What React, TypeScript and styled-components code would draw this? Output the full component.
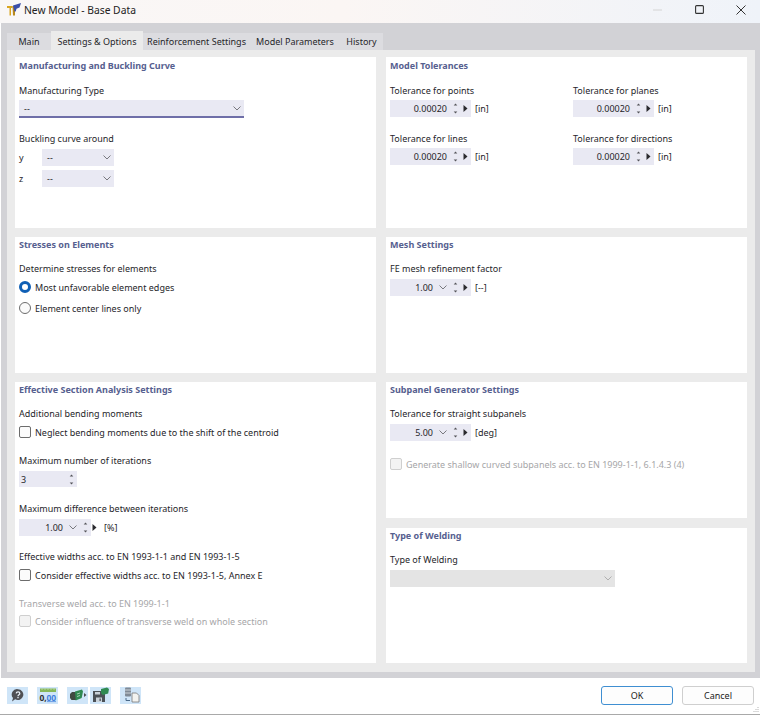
import React from 'react';
import styled, { createGlobalStyle } from 'styled-components';

const Global = createGlobalStyle`
  html, body { margin: 0; padding: 0; background: #ffffff; }
  body { font-family: "Noto Sans", "Open Sans", sans-serif; font-size: 9px; color: #26262a; }
  * { box-sizing: border-box; }
`;

const Window = styled.div`
  position: relative; width: 760px; height: 715px; display: flex; flex-direction: column; background: #fff; overflow: hidden;
`;
const TitleBar = styled.div`
  height: 23px; flex: none; display: flex; align-items: center; padding: 0 0 4px 7px;
  background: linear-gradient(90deg, #f9f7f7 0%, #fbf6f4 45%, #eff3f9 100%);
`;
const AppTitle = styled.span`margin-left: 3px; font-size: 10.3px; color: #222;`;
const WindowButtons = styled.div`margin-left: auto; margin-right: -2px; display: flex; align-items: center;`;
const WindowButton = styled.span`width: 42px; height: 19px; display: flex; align-items: center; justify-content: center;`;
const Body = styled.div`
  flex: none; height: 655px; margin-left: 1px; background: #d2d2d6; display: flex; flex-direction: column; padding: 8px 5px 6px 6px;
`;
const TabRow = styled.div`display: flex; height: 19px; flex: none; align-items: flex-end;`;
const Tab = styled.div<{ $active?: boolean; $w: number }>`
  width: ${p => p.$w}px; height: ${p => (p.$active ? 19 : 17)}px; display: flex; align-items: center; justify-content: center;
  padding-top: ${p => (p.$active ? 1 : 0)}px;
  background: ${p => (p.$active ? '#ebebeb' : '#dcdce0')}; color: #26262a; white-space: nowrap;
`;
const TabPanel = styled.div`
  flex: 1; background: #ebebeb; padding: 7px 7px 9px 8px;
  display: grid; grid-template-columns: 361px 361px; column-gap: 10px;
`;
const Column = styled.div`display: flex; flex-direction: column;`;
const Card = styled.section<{ $h: number; $gap?: number }>`
  height: ${p => p.$h}px; margin-bottom: ${p => p.$gap ?? 0}px; background: #fff; padding: 2px 4px 0 4px;
  display: flex; flex-direction: column; align-items: flex-start;
`;
const CardTitle = styled.h3<{ $after?: number; $before?: number }>`
  margin: ${p => p.$before ?? 0}px 0 ${p => p.$after ?? 11}px; font-size: 9px; line-height: 12px; font-weight: 700; color: #56608f; white-space: nowrap;
`;
const Label = styled.div<{ $mute?: boolean; $top?: number }>`
  line-height: 14px; margin-top: ${p => p.$top ?? 0}px; color: ${p => (p.$mute ? '#a6a6a8' : '#26262a')}; white-space: nowrap;
`;
const Field = styled.div<{ $w: number; $disabled?: boolean; $focus?: boolean; $h?: number; $pad?: number; $top?: number }>`
  width: ${p => p.$w}px; height: ${p => p.$h ?? 17}px; flex: none; display: flex; align-items: center;
  margin-top: ${p => p.$top ?? 0}px;
  background: ${p => (p.$disabled ? '#e4e4e4' : '#e9e9f3')}; padding: 0 3px 0 ${p => p.$pad ?? 5}px;
  border-bottom: ${p => (p.$focus ? '2px solid #6f6fa8' : 'none')}; color: #26262a;
`;
const Value = styled.span`flex: 1; text-align: right; white-space: nowrap;`;
const LeftValue = styled.span`flex: 1; white-space: nowrap;`;
const FieldRow = styled.div<{ $top?: number; $gap?: number }>`
  display: flex; align-items: center; gap: ${p => p.$gap ?? 4}px; margin-top: ${p => p.$top ?? 2}px;
`;
const AxisRow = styled.div<{ $top?: number }>`display: flex; align-items: center; margin-top: ${p => p.$top ?? 0}px;`;
const AxisLabel = styled.span`width: 23px;`;
const OptionRow = styled.div<{ $top?: number; $mute?: boolean }>`
  display: flex; align-items: center; gap: 4px; height: 14px; margin-top: ${p => p.$top ?? 0}px; color: ${p => (p.$mute ? '#a6a6a8' : '#26262a')}; white-space: nowrap;
`;
const Box = styled.span<{ $mute?: boolean }>`
  width: 12px; height: 12px; flex: none; border-radius: 2px; background: ${p => (p.$mute ? '#f3f3f3' : '#fbfbfb')};
  border: 1px solid ${p => (p.$mute ? '#cfcfcf' : '#6c6c6c')};
`;
const Radio = styled.span<{ $on?: boolean }>`
  width: 12px; height: 12px; flex: none; border-radius: 50%; background: ${p => (p.$on ? '#fff' : '#fbfbfb')};
  border: ${p => (p.$on ? '3px solid #0f5fb5' : '1px solid #6c6c6c')};
`;
const TwoCols = styled.div`display: grid; grid-template-columns: 183px 160px; row-gap: 15px; align-self: stretch;`;
const Group = styled.div`display: flex; flex-direction: column;`;
const Footer = styled.div`
  flex: 1; display: flex; align-items: center; padding: 0 6px 2px 7px; background: #fff; border-bottom: 1px solid #a9a9a9;
`;
const ToolGroup = styled.div`display: flex; gap: 2px; margin-right: 9px;`;
const ToolButton = styled.span`
  width: 21px; height: 17px; background: #cfe5f8; display: flex; align-items: center; justify-content: center;
`;
const Buttons = styled.div`margin-left: auto; display: flex; gap: 9px;`;
const Btn = styled.div<{ $primary?: boolean }>`
  width: 72px; height: 19px; border-radius: 3px; background: #fdfdfd; display: flex; align-items: center; justify-content: center;
  border: 1px solid ${p => (p.$primary ? '#3f8fd2' : '#cfcfcf')}; color: #222;
`;
const Grip = styled.svg`position: absolute; right: 1px; bottom: 2px;`;
const ChevronSlot = styled.span`margin-left: 6px; display: flex;`;
const SpinIcon = styled.svg`margin-left: 6px; flex: none;`;
const NextIcon = styled.svg<{ $gap?: number }>`margin-left: ${p => p.$gap ?? 5}px; flex: none;`;
const PercentUnit = styled.span`margin-left: 7px;`;

const Chevron = ({ c = '#6b6b70' }: { c?: string }) => (
  <svg width="8" height="5" viewBox="0 0 8 5"><path d="M.5.5 4 4 7.500.5" fill="none" stroke={c} strokeWidth=".9" /></svg>
);
const Spin = () => (
  <SpinIcon width="5" height="13" viewBox="0 0 5 13">
    <path d="M2.500 1.500 4.300 3.500H.7zM2.500 11.500.7 9.500h3.600z" fill="#55555a" />
  </SpinIcon>
);
const Next = ({ gap }: { gap?: number }) => (
  <NextIcon $gap={gap} width="5" height="7" viewBox="0 0 5 7">
    <path d="M.5 0 4.500 3.500.5 7z" fill="#2a2a2e" />
  </NextIcon>
);
const Num = ({ v, unit, drop, top }: { v: string; unit: string; drop?: boolean; top?: number }) => (
  <FieldRow $top={top}>
    <Field $w={81}>
      <Value>{v}</Value>
      {drop && <ChevronSlot><Chevron /></ChevronSlot>}
      <Spin /><Next />
    </Field>
    <span>{unit}</span>
  </FieldRow>
);

const Logo = () => (
  <svg width="14" height="13" viewBox="0 0 14 13">
    <path d="M0 3h5.500V5H4v7.500H2.500V5H0z" fill="#d9a520" />
    <path d="M5.500 3H8v9.500H6z" fill="#b98a1c" />
    <path d="M6 2.500 14 0l-1.500 4.500-3 1.200-.8 2.800H7.500z" fill="#3b4fa8" />
  </svg>
);
const Help = () => (
  <svg width="15" height="15" viewBox="0 0 15 15">
    <path d="M8 1.200a5.400 5.400 0 1 1-2.900 10L2 13.600l1-3.600A5.400 5.400 0 0 1 8 1.200z" fill="#4f5054" />
    <path d="M6.200 5.400c.2-2 3.600-2 3.600 0 0 1.400-1.800 1.400-1.800 2.800M8 9v1.200" stroke="#e8eef5" strokeWidth="1.300" fill="none" />
  </svg>
);
const Units = () => (
  <svg width="18" height="15" viewBox="0 0 18 15">
    <rect x="1" y="0.5" width="16" height="3.500" fill="#86b85a" />
    <path d="M3 .5v1.500M6 .5v1.500M9 .5v1.500M12 .5v1.500M15 .5v1.500" stroke="#d9e8c8" strokeWidth=".6" />
    <path d="M8 13.600h9" stroke="#3f7fdc" strokeWidth=".7" />
    <text x="0.5" y="12.500" fontSize="8.500" fontWeight="700" fontFamily="Noto Sans" fill="#333">0,</text>
    <text x="7.500" y="12.500" fontSize="8.500" fontWeight="700" fontFamily="Noto Sans" fill="#3f7fdc">00</text>
  </svg>
);
const Load = () => (
  <svg width="18" height="14" viewBox="0 0 18 14">
    <path d="M1 6 3 4h4v8H2.500L1 10z" fill="#3f4a42" />
    <path d="M6 3.500 13 1.500l1 2-1.300 6.500-6 2.500z" fill="#2f8a52" />
    <path d="M8 6l3-1M8 8.500l3-1" stroke="#bfe0c8" strokeWidth=".8" />
    <path d="M15 5l2.500 2-2.500 2z" fill="#4c4c50" />
  </svg>
);
const Save = () => (
  <svg width="18" height="16" viewBox="0 0 18 16">
    <path d="M1 4h10.500L13 5.500V15H1z" fill="#4b5157" />
    <rect x="3" y="5" width="5" height="2.500" fill="#c9d2da" />
    <rect x="4" y="10.500" width="6" height="4.500" fill="#c9d2da" />
    <rect x="7.500" y="11.500" width="1.300" height="2.500" fill="#4b5157" />
    <path d="M9 2 15 .5l2 1.500-.8 4.500-5.500 1.500L9 6z" fill="#2f8a52" />
  </svg>
);
const Copy = () => (
  <svg width="18" height="16" viewBox="0 0 18 16">
    <rect x="3" y="0.5" width="6" height="9" rx="1" fill="#7f8a96" />
    <path d="M3 3h6M3 6h6" stroke="#dfe5ea" strokeWidth=".8" />
    <path d="M10 6h4.500L17 8.500V15h-7z" fill="#f3f3f0" stroke="#777" strokeWidth=".8" />
    <path d="M4 11v2.500h4" stroke="#4a6a8a" strokeWidth="1" fill="none" />
  </svg>
);

export default function App() {
  return (
    <Window>
      <Global />
      <TitleBar>
        <Logo />
        <AppTitle>New Model - Base Data</AppTitle>
        <WindowButtons>
          <WindowButton>
            <svg width="9" height="2" viewBox="0 0 9 2"><path d="M0 1h9" stroke="#d4d4d4" /></svg>
          </WindowButton>
          <WindowButton>
            <svg width="9" height="9" viewBox="0 0 9 9"><rect x=".6" y=".6" width="7.800" height="7.800" rx="1" fill="none" stroke="#333" strokeWidth="1.100" /></svg>
          </WindowButton>
          <WindowButton>
            <svg width="10" height="10" viewBox="0 0 10 10"><path d="M.5.5l9 9M9.500.5l-9 9" stroke="#333" strokeWidth="1" /></svg>
          </WindowButton>
        </WindowButtons>
      </TitleBar>
      <Body>
        <TabRow>
          <Tab $w={44}>Main</Tab>
          <Tab $w={92} $active>Settings &amp; Options</Tab>
          <Tab $w={107}>Reinforcement Settings</Tab>
          <Tab $w={90}>Model Parameters</Tab>
          <Tab $w={43}>History</Tab>
        </TabRow>
        <TabPanel>
          <Column>
            <Card $h={171} $gap={9}>
              <CardTitle $before={1} $after={12}>Manufacturing and Buckling Curve</CardTitle>
              <Label>Manufacturing Type</Label>
              <Field $w={225} $h={18} $focus $top={2}>
                <LeftValue>--</LeftValue><Chevron />
              </Field>
              <Label $top={14}>Buckling curve around</Label>
              <AxisRow $top={3}><AxisLabel>y</AxisLabel><Field $w={72}><LeftValue>--</LeftValue><Chevron /></Field></AxisRow>
              <AxisRow $top={4}><AxisLabel>z</AxisLabel><Field $w={72}><LeftValue>--</LeftValue><Chevron /></Field></AxisRow>
            </Card>
            <Card $h={136} $gap={9}>
              <CardTitle>Stresses on Elements</CardTitle>
              <Label>Determine stresses for elements</Label>
              <OptionRow $top={4}><Radio $on />Most unfavorable element edges</OptionRow>
              <OptionRow $top={7}><Radio />Element center lines only</OptionRow>
            </Card>
            <Card $h={281}>
              <CardTitle>Effective Section Analysis Settings</CardTitle>
              <Label>Additional bending moments</Label>
              <OptionRow $top={4}><Box />Neglect bending moments due to the shift of the centroid</OptionRow>
              <Label $top={15}>Maximum number of iterations</Label>
              <FieldRow $top={3}>
                <Field $w={58} $h={16} $pad={2}><LeftValue>3</LeftValue><Spin /></Field>
              </FieldRow>
              <Label $top={15}>Maximum difference between iterations</Label>
              <FieldRow $top={3} $gap={0}>
                <Field $w={72}><Value>1.00</Value><ChevronSlot><Chevron /></ChevronSlot><Spin /></Field>
                <Next gap={1} />
                <PercentUnit>[%]</PercentUnit>
              </FieldRow>
              <Label $top={14}>Effective widths acc. to EN 1993-1-1 and EN 1993-1-5</Label>
              <OptionRow $top={4}><Box />Consider effective widths acc. to EN 1993-1-5, Annex E</OptionRow>
              <Label $top={15} $mute>Transverse weld acc. to EN 1999-1-1</Label>
              <OptionRow $top={3} $mute><Box $mute />Consider influence of transverse weld on whole section</OptionRow>
            </Card>
          </Column>
          <Column>
            <Card $h={171} $gap={9}>
              <CardTitle $before={1} $after={12}>Model Tolerances</CardTitle>
              <TwoCols>
                <Group><Label>Tolerance for points</Label><Num v="0.00020" unit="[in]" /></Group>
                <Group><Label>Tolerance for planes</Label><Num v="0.00020" unit="[in]" /></Group>
                <Group><Label>Tolerance for lines</Label><Num v="0.00020" unit="[in]" /></Group>
                <Group><Label>Tolerance for directions</Label><Num v="0.00020" unit="[in]" /></Group>
              </TwoCols>
            </Card>
            <Card $h={136} $gap={9}>
              <CardTitle>Mesh Settings</CardTitle>
              <Label>FE mesh refinement factor</Label>
              <Num v="1.00" unit="[--]" drop top={3} />
            </Card>
            <Card $h={136} $gap={10}>
              <CardTitle>Subpanel Generator Settings</CardTitle>
              <Label>Tolerance for straight subpanels</Label>
              <Num v="5.00" unit="[deg]" drop top={3} />
              <OptionRow $top={16} $mute><Box $mute />Generate shallow curved subpanels acc. to EN 1999-1-1, 6.1.4.3 (4)</OptionRow>
            </Card>
            <Card $h={135}>
              <CardTitle>Type of Welding</CardTitle>
              <Label>Type of Welding</Label>
              <Field $w={225} $disabled $top={3}>
                <LeftValue /><Chevron c="#a8a8a8" />
              </Field>
            </Card>
          </Column>
        </TabPanel>
      </Body>
      <Footer>
        <ToolGroup><ToolButton><Help /></ToolButton></ToolGroup>
        <ToolGroup><ToolButton><Units /></ToolButton></ToolGroup>
        <ToolGroup><ToolButton><Load /></ToolButton><ToolButton><Save /></ToolButton></ToolGroup>
        <ToolGroup><ToolButton><Copy /></ToolButton></ToolGroup>
        <Buttons>
          <Btn $primary>OK</Btn>
          <Btn>Cancel</Btn>
        </Buttons>
      </Footer>
      <Grip width="6" height="6" viewBox="0 0 6 6"><path d="M4.500 0h1v1h-1zM2.500 2h1v1h-1zM4.500 2h1v1h-1zM.5 4h1v1h-1zM2.500 4h1v1h-1zM4.500 4h1v1h-1z" fill="#b5b5b5" /></Grip>
    </Window>
  );
}
